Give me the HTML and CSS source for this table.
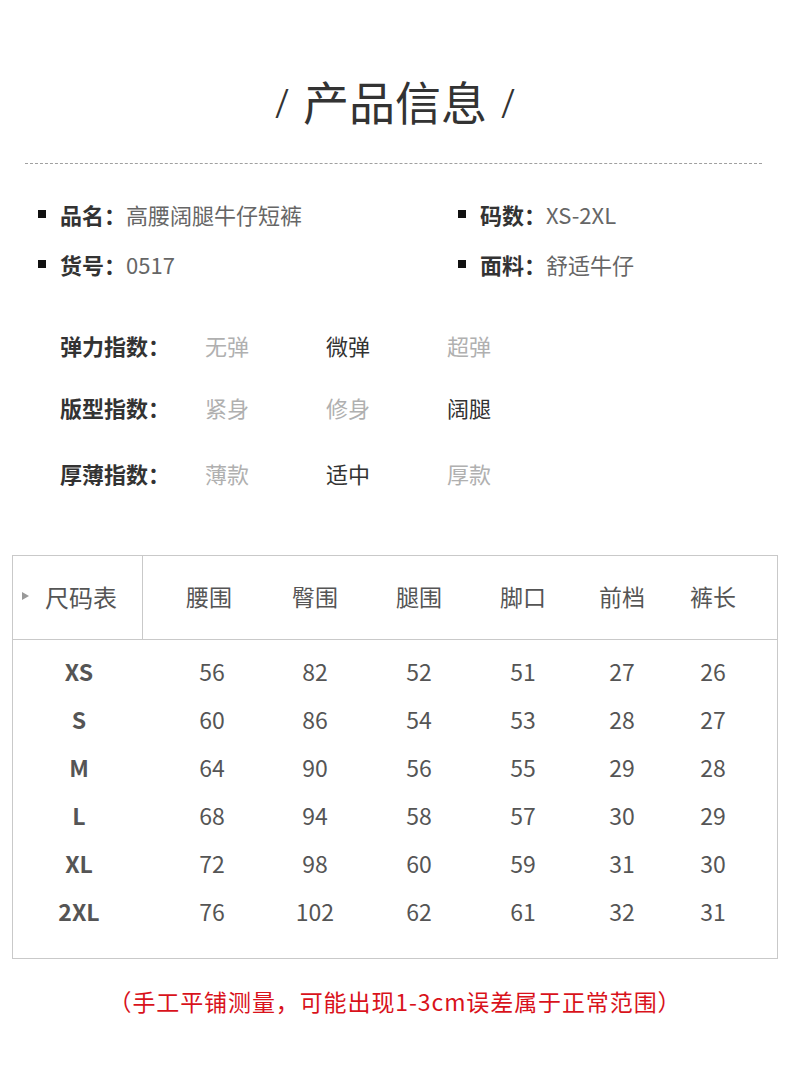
FILE: index.html
```html
<!DOCTYPE html>
<html lang="zh">
<head>
<meta charset="utf-8">
<link rel="stylesheet" href="styles.css">
</head>
<body>
<div class="page">
  <h1 class="title"><span class="slash">/</span>产品信息<span class="slash">/</span></h1>
  <div class="dash"></div>

  <div class="info">
    <div class="info-col">
      <div class="info-item"><i class="sq"></i><b>品名：</b><span>高腰阔腿牛仔短裤</span></div>
      <div class="info-item"><i class="sq"></i><b>货号：</b><span>0517</span></div>
    </div>
    <div class="info-col right">
      <div class="info-item"><i class="sq"></i><b>码数：</b><span>XS-2XL</span></div>
      <div class="info-item"><i class="sq"></i><b>面料：</b><span>舒适牛仔</span></div>
    </div>
  </div>

  <div class="index">
    <div class="idx-row"><b>弹力指数：</b><span class="opt">无弹</span><span class="opt on">微弹</span><span class="opt">超弹</span></div>
    <div class="idx-row r2"><b>版型指数：</b><span class="opt">紧身</span><span class="opt">修身</span><span class="opt on">阔腿</span></div>
    <div class="idx-row r3"><b>厚薄指数：</b><span class="opt">薄款</span><span class="opt on">适中</span><span class="opt">厚款</span></div>
  </div>

  <div class="table">
    <div class="thead grid">
      <div class="th first"><i class="tri"></i>尺码表</div>
      <div class="th c2">腰围</div>
      <div class="th">臀围</div>
      <div class="th">腿围</div>
      <div class="th">脚口</div>
      <div class="th">前档</div>
      <div class="th">裤长</div>
    </div>
    <div class="tbody">
      <div class="grid row"><b>XS</b><span class="c2">56</span><span>82</span><span>52</span><span>51</span><span>27</span><span>26</span></div>
      <div class="grid row"><b>S</b><span class="c2">60</span><span>86</span><span>54</span><span>53</span><span>28</span><span>27</span></div>
      <div class="grid row"><b>M</b><span class="c2">64</span><span>90</span><span>56</span><span>55</span><span>29</span><span>28</span></div>
      <div class="grid row"><b>L</b><span class="c2">68</span><span>94</span><span>58</span><span>57</span><span>30</span><span>29</span></div>
      <div class="grid row"><b>XL</b><span class="c2">72</span><span>98</span><span>60</span><span>59</span><span>31</span><span>30</span></div>
      <div class="grid row"><b>2XL</b><span class="c2">76</span><span>102</span><span>62</span><span>61</span><span>32</span><span>31</span></div>
    </div>
  </div>

  <p class="note">（手工平铺测量，可能出现1-3cm误差属于正常范围）</p>
</div>
</body>
</html>
```

FILE: styles.css
```css
* { box-sizing: border-box; }
body {
  margin: 0;
  background: #fff;
  font-family: "Noto Sans CJK SC", "Noto Sans", sans-serif;
  color: #333;
}
.page {
  width: 790px;
  height: 1086px;
  overflow: hidden;
}
.title {
  margin: 0;
  padding-top: 69px;
  height: 131px;
  text-align: center;
  font-size: 46px;
  font-weight: 400;
  line-height: 62px;
  color: #333;
}
.slash {
  font-family: "Noto Sans", sans-serif;
  font-weight: 300;
  font-size: 40px;
  margin: 0 14px;
  display: inline-block;
  transform: translateY(-2px);
}
.dash {
  margin: 32px 28px 0 25px;
  border-top: 1px dashed #a0a0a0;
}
.info {
  display: flex;
  padding-left: 38px;
  margin-top: 34px;
}
.info-col {
  width: 420px;
  display: flex;
  flex-direction: column;
  gap: 18px;
}
.info-col.right { width: auto; }
.info-item {
  display: flex;
  align-items: center;
  height: 32px;
  font-size: 22px;
}
.info-item b { color: #333; font-weight: 700; }
.info-item span { color: #666; }
.sq {
  width: 8px;
  height: 8px;
  background: #111;
  margin-right: 14px;
}
.index {
  padding-left: 60px;
  margin-top: 49px;
}
.idx-row {
  display: flex;
  align-items: center;
  height: 32px;
  font-size: 22px;
}
.idx-row.r2 { margin-top: 30px; }
.idx-row.r3 { margin-top: 34px; }
.idx-row b {
  width: 145px;
  font-weight: 700;
  color: #333;
}
.opt {
  width: 121px;
  color: #b0b0b0;
}
.opt.on { color: #333; }
.table {
  margin: 66px 12px 0 12px;
  border: 1px solid #c9c9c9;
  height: 404px;
}
.grid {
  display: grid;
  grid-template-columns: 130px 120px 104px 104px 104px 94px 88px;
  align-items: center;
}
.thead {
  height: 84px;
  padding-bottom: 3px;
  border-bottom: 1px solid #c9c9c9;
  font-size: 23px;
  color: #555;
}
.th {
  text-align: center;
}
.th.first {
  height: 83px;
  margin-bottom: -3px;
  border-right: 1px solid #c9c9c9;
  display: flex;
  align-items: center;
  padding-left: 9px;
  padding-bottom: 3px;
  font-size: 24px;
  text-align: left;
}
.tri {
  width: 0;
  height: 0;
  border-left: 7px solid #999;
  border-top: 4px solid transparent;
  border-bottom: 4px solid transparent;
  margin-right: 16px;
}
.thead .c2 { padding-left: 12px; }
.row .c2 { padding-left: 18px; }
.tbody { padding-top: 7px; }
.row {
  height: 48px;
  font-size: 23px;
  color: #555;
  text-align: center;
}
.row b {
  font-weight: 700;
  font-size: 23px;
  color: #555;
  padding-left: 2px;
}
.note {
  margin: 25px 0 0 0;
  text-align: center;
  font-size: 23px;
  color: #d9121b;
  letter-spacing: 0.9px;
}
```
